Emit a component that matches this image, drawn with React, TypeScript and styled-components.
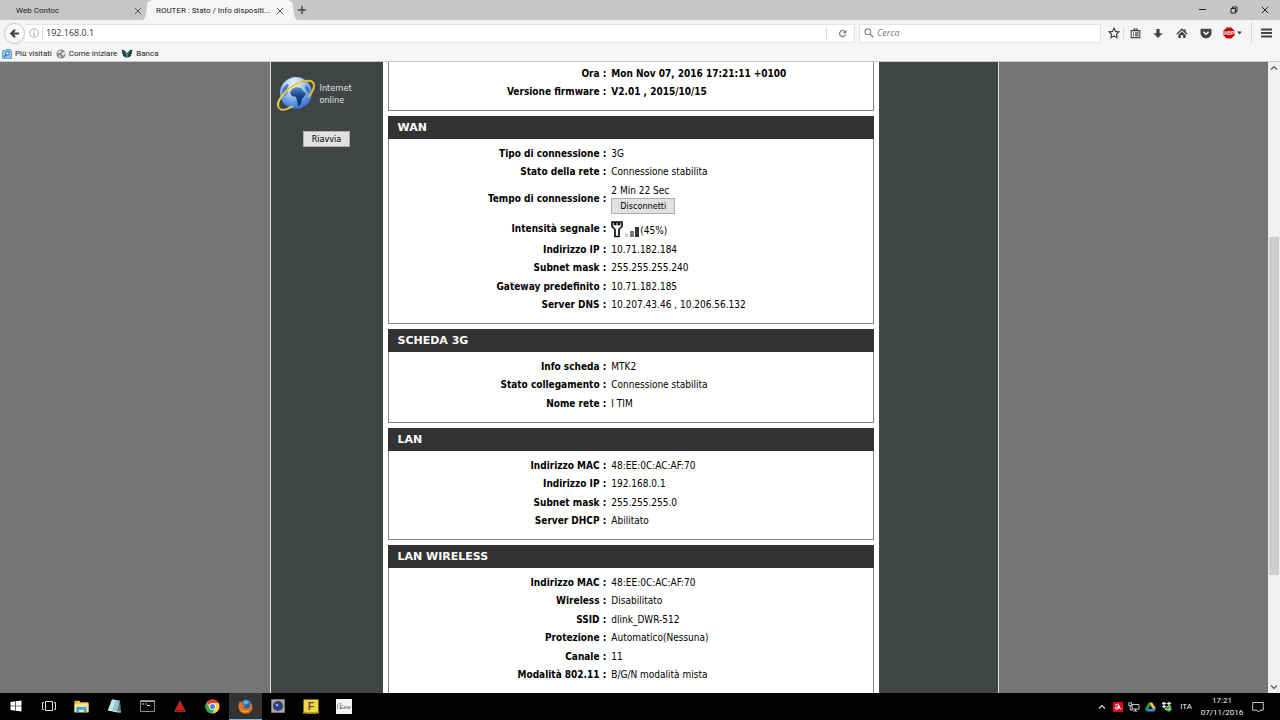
import React from 'react';
import styled, { createGlobalStyle } from 'styled-components';

const chromeFont = 'Roboto, "Open Sans", sans-serif';
const pageFont = '"DejaVu Sans Condensed", "DejaVu Sans", sans-serif';

const GlobalStyle = createGlobalStyle`
  *, *::before, *::after { box-sizing: border-box; }
  body { margin: 0; background: #757575; }
  button { font: inherit; color: inherit; border: 0; padding: 0; background: none; }
  svg { display: block; flex: none; }
`;

const Screen = styled.div`
  display: flex;
  flex-direction: column;
  height: 100vh;
  overflow: hidden;
  font: 8px/12px ${chromeFont};
  color: #222;
`;

/* ---------- browser window ---------- */

const TabStrip = styled.div`
  display: flex;
  align-items: stretch;
  flex: none;
  height: 20px;
  background: #c6c6c6;
`;

const Tab = styled.div<{ $active?: boolean }>`
  display: flex;
  align-items: center;
  justify-content: space-between;
  position: relative;
  width: ${p => (p.$active ? '138px' : '151px')};
  padding: ${p => (p.$active ? '1px 4px 0 5px' : '1px 8px 0 16px')};
  background: ${p => (p.$active ? '#f5f5f5' : 'transparent')};
  white-space: nowrap;
`;

const TabTitle = styled.span`
  overflow: hidden;
  text-overflow: ellipsis;
`;

const TabEdge = styled.svg<{ $side: 'left' | 'right' }>`
  position: absolute;
  top: 0;
  ${p => (p.$side === 'left' ? 'right: 100%;' : 'left: 100%; transform: scaleX(-1);')}
`;

const IconButton = styled.button<{ $w?: number }>`
  display: flex;
  align-items: center;
  justify-content: center;
  flex: none;
  width: ${p => p.$w ?? 24}px;
`;

const NewTab = styled(IconButton)`
  margin-left: 8px;
`;

const WindowControls = styled.div`
  display: flex;
  height: 19px;
  margin-left: auto;
`;

const NavBar = styled.div`
  display: flex;
  align-items: center;
  flex: none;
  height: 26px;
  padding: 0 2px 0 4px;
  background: #f5f5f5;
`;

const BackButton = styled.button`
  display: flex;
  align-items: center;
  justify-content: center;
  flex: none;
  width: 21px;
  height: 21px;
  border: 1px solid #c4c4c4;
  border-radius: 50%;
  background: #fbfbfb;
  z-index: 1;
`;

const Field = styled.label`
  display: flex;
  align-items: center;
  height: 19px;
  border: 1px solid #e4e4e4;
  background: #fff;
`;

const AddressField = styled(Field)`
  flex: 1;
  border-left: 0;
  padding-left: 4px;
`;

const SearchField = styled(Field)`
  width: 242px;
  margin: 0 4px;
  padding-left: 4px;
  gap: 3px;
`;

const TextInput = styled.input`
  flex: 1;
  min-width: 0;
  border: 0;
  padding: 0;
  outline: 0;
  background: none;
  font: 9px/12px "Open Sans", sans-serif;
  color: #333;
  &::placeholder { font-style: italic; color: #777; opacity: 1; }
`;

const Separator = styled.span<{ $h?: number; $tight?: boolean }>`
  flex: none;
  width: 1px;
  height: ${p => p.$h ?? 12}px;
  margin: 0 ${p => (p.$tight ? 0 : 3)}px;
  background: #d8d8d8;
`;

const Bookmarks = styled.nav`
  display: flex;
  align-items: flex-start;
  gap: 4px;
  flex: none;
  height: 16px;
  padding: 2px 2px 0;
  background: #f5f5f5;
  border-bottom: 1px solid #c9cbcb;
`;

const Bookmark = styled.a`
  display: flex;
  align-items: center;
  gap: 3px;
  color: #222;
  text-decoration: none;
`;

/* ---------- router page ---------- */

const Viewport = styled.div`
  display: flex;
  flex: 1;
  min-height: 0;
`;

const Backdrop = styled.main`
  display: flex;
  justify-content: center;
  flex: 1;
  min-width: 0;
  overflow: hidden;
  background: #757575;
`;

const Page = styled.div`
  display: grid;
  grid-template-columns: 112px minmax(0, 1fr) 119px;
  width: 100%;
  max-width: 729px;
  border: solid #e0e0e0;
  border-width: 0 1px;
  background: #404444;
  font: 10px/14px ${pageFont};
  color: #000;
`;

const Sidebar = styled.aside`
  display: flex;
  flex-direction: column;
  align-items: center;
  gap: 19px;
  padding-top: 14px;
`;

const Status = styled.div`
  display: flex;
  align-items: center;
  align-self: stretch;
  gap: 4px;
  padding-left: 6px;
  font-size: 9px;
  line-height: 12px;
  color: #e4e4e4;
`;

const StatusText = styled.span`
  width: 48px;
`;

const FormButton = styled.button`
  display: block;
  height: 16px;
  padding: 0 8px;
  border: 1px solid #adadad;
  background: #e1e1e1;
  font-size: 9px;
  line-height: 14px;
  color: #000;
`;

const Panels = styled.div`
  display: flex;
  flex-direction: column;
  gap: 5px;
  padding: 0 5px;
  background: #fff;
`;

const Panel = styled.section`
  flex: none;
  border: 1px solid #858585;
  border-top: 0;
  padding-bottom: 9px;
`;

const PanelTitle = styled.h2`
  margin: 0 -1px 5px;
  padding: 0 10px;
  background: #333;
  color: #fff;
  font: bold 11px/23px "DejaVu Sans", sans-serif;
`;

const Table = styled.table<{ $cut?: boolean }>`
  width: 100%;
  margin-top: ${p => (p.$cut ? '2px' : '0')};
  border-collapse: collapse;
  table-layout: fixed;
`;

const Row = styled.tr`
  height: 19px;
  &:nth-child(even) { height: 18px; }
`;

const Label = styled.th`
  width: 45%;
  padding: 0;
  text-align: right;
  white-space: nowrap;
`;

const Value = styled.td<{ $bold?: boolean }>`
  padding: 0 0 0 5px;
  font-weight: ${p => (p.$bold ? 'bold' : 'normal')};
  white-space: nowrap;
`;

const Duration = styled.div`
  padding: 3px 0;
`;

const Signal = styled.div`
  display: flex;
  align-items: flex-end;
  height: 23px;
  padding-bottom: 2px;
`;

const ScrollBar = styled.div`
  display: flex;
  flex-direction: column;
  flex: none;
  width: 12px;
  background: #f0f0f0;
`;

const ScrollArrow = styled.button`
  display: flex;
  align-items: center;
  justify-content: center;
  height: 12px;
`;

const ScrollSpace = styled.div<{ $grow: number }>`
  flex: ${p => p.$grow} 0 0;
`;

const ScrollThumb = styled(ScrollSpace)`
  margin: 0 1px;
  background: #cdcdcd;
`;

/* ---------- taskbar ---------- */

const Taskbar = styled.footer`
  display: flex;
  justify-content: space-between;
  flex: none;
  height: 27px;
  background: #020202;
  color: #eee;
`;

const Apps = styled.div`
  display: flex;
  width: 360px;
`;

const AppButton = styled.button<{ $active?: boolean }>`
  display: flex;
  align-items: center;
  justify-content: center;
  flex: 1;
  background: ${p => (p.$active ? '#333' : 'none')};
  border-bottom: 1px solid ${p => (p.$active ? '#76b9ed' : 'transparent')};
`;

const Tray = styled.div`
  display: flex;
  align-items: center;
  padding-right: 10px;
`;

const Language = styled.button`
  width: 24px;
`;

const Clock = styled.div`
  width: 48px;
  text-align: center;
`;

/* ---------- icons ---------- */

const line = { fill: 'none', stroke: '#444', strokeLinecap: 'butt' as const };

const Cross = ({ s = 8, c = '#555' }: { s?: number; c?: string }) => (
  <svg width={s} height={s} viewBox="0 0 8 8"><path d="M.8.8l6.4 6.4M7.2.8L.8 7.2" {...line} stroke={c} /></svg>
);
const Plus = () => <svg width="8" height="8" viewBox="0 0 8 8"><path d="M4 0v8M0 4h8" {...line} strokeWidth="1.4" /></svg>;
const Edge = ({ side }: { side: 'left' | 'right' }) => (
  <TabEdge $side={side} width="8" height="20" viewBox="0 0 8 20">
    <path d="M8 1C3 1 4.500 6 3.500 11S2 19 0 20h8z" fill="#f5f5f5" />
  </TabEdge>
);
const Minimize = () => <svg width="7" height="7" viewBox="0 0 7 7"><path d="M0 3.500h7" {...line} stroke="#222" /></svg>;
const Restore = () => (
  <svg width="8" height="8" viewBox="0 0 8 8"><path d="M1 2.500h4.500V7H1zM2.500 2.500V1H7v4.500H5.500" {...line} stroke="#222" /></svg>
);
const Back = () => (
  <svg width="11" height="11" viewBox="0 0 11 11"><path d="M10 5.500H2.500M6 1.800L2.300 5.500 6 9.200" {...line} strokeWidth="2.200" /></svg>
);
const Info = () => (
  <svg width="10" height="10" viewBox="0 0 10 10">
    <circle cx="5" cy="5" r="4.300" {...line} stroke="#999" strokeWidth=".8" />
    <path d="M5 2.300v1.100M5 4.300v3.400" {...line} stroke="#888" />
  </svg>
);
const Reload = () => (
  <svg width="9" height="9" viewBox="0 0 9 9">
    <path d="M7 2.700A3 3 0 1 0 7.500 5.300" {...line} stroke="#777" strokeWidth="1.200" />
    <path d="M8.200.8v3.400H4.800z" fill="#777" />
  </svg>
);
const Magnifier = () => (
  <svg width="10" height="10" viewBox="0 0 10 10">
    <circle cx="3.800" cy="3.800" r="2.900" {...line} stroke="#888" strokeWidth="1.100" />
    <path d="M6 6l3.300 3.300" {...line} stroke="#888" strokeWidth="1.600" />
  </svg>
);
const Star = () => (
  <svg width="12" height="12" viewBox="0 0 12 12">
    <path d="M6 1.200l1.500 3.200 3.400.4-2.500 2.400.7 3.500L6 9l-3.100 1.700.7-3.500L1.100 4.800l3.400-.4z" {...line} strokeWidth="1.200" />
  </svg>
);
const Clipboard = () => (
  <svg width="11" height="11" viewBox="0 0 11 11">
    <path d="M1.200 2.600h8.600v7H1.200zM3.800 2.600V1h3.400v1.600M3 4.700h1M5 4.700h3.500M3 6.200h1M5 6.200h3.500M3 7.800h1M5 7.800h3.500" {...line} strokeWidth="1.100" />
  </svg>
);
const Download = () => <svg width="10" height="11" viewBox="0 0 10 11"><path d="M3.400 1h3.200v4.200h3L5 10 .4 5.200h3z" fill="#444" /></svg>;
const Home = () => (
  <svg width="12" height="11" viewBox="0 0 12 11">
    <path d="M.8 6.200L6 1.300l5.200 4.900M9 1.200v3" {...line} strokeWidth="1.400" />
    <path d="M6 3.600l3.600 3.300V10H7.200V7.300H4.800V10H2.400V6.900z" fill="#444" />
  </svg>
);
const Pocket = () => (
  <svg width="12" height="11" viewBox="0 0 12 11">
    <path d="M1.500.8h9q1 0 1 1V5a5.500 5.200 0 0 1-11 0V1.800q0-1 1-1z" fill="#444" />
    <path d="M3.400 3.800L6 6.300l2.600-2.500" {...line} stroke="#fff" strokeWidth="1.500" />
  </svg>
);
const AdBlock = () => (
  <svg width="20" height="12" viewBox="0 0 20 12">
    <path d="M3.700.5h4.600L11.500 3.700v4.600L8.300 11.500H3.700L.5 8.300V3.700z" fill="#c80000" />
    <text x="6" y="7.700" fontSize="5" fontWeight="bold" fontFamily="Liberation Sans" fill="#fff" textAnchor="middle">ABP</text>
    <path d="M14 4.500h5l-2.500 3z" fill="#444" />
  </svg>
);
const Menu = () => <svg width="11" height="10" viewBox="0 0 11 10"><path d="M0 1.500h11M0 5h11M0 8.500h11" {...line} strokeWidth="1.800" /></svg>;
const Chevron = ({ up, c = '#555' }: { up?: boolean; c?: string }) => (
  <svg width="8" height="6" viewBox="0 0 8 6"><path d={up ? 'M1 4.500l3-3 3 3' : 'M1 1.500l3 3 3-3'} {...line} stroke={c} strokeWidth="1.200" /></svg>
);

const VisitedIcon = () => (
  <svg width="10" height="10" viewBox="0 0 10 10">
    <path d="M.5 1.500h3l1-1h4l1 1v8h-9z" fill="#8ec4e8" stroke="#5b9cc9" strokeWidth=".8" />
    <circle cx="5.500" cy="4.300" r="1.800" fill="#d8effc" stroke="#2f6d9c" />
    <path d="M4.200 5.700L2 8" stroke="#2f6d9c" strokeWidth="1.300" />
  </svg>
);
const GreyGlobe = () => (
  <svg width="10" height="10" viewBox="0 0 10 10">
    <circle cx="5" cy="5" r="4.600" fill="#8b8b8b" />
    <path d="M1.500 3l2-1.500 2 .6L4.300 4l-1.500.6zM6 3.400l2.600-.8.7 2L7.500 7 6 5.500zM3 6l2 .8L4.500 9l-1.300-.8z" fill="#dedede" />
  </svg>
);
const BankIcon = () => (
  <svg width="12" height="10" viewBox="0 0 12 10">
    <path d="M.5.800L3 1l2.700 2.800V9L3.200 7.800 1.500 6.200l.8-.4L.5 4l.8-.4z" fill="#17434d" />
    <path d="M11.500.800L9 1 6.300 3.800V9l2.500-1.200 1.700-1.600-.8-.4L11.500 4l-.8-.4z" fill="#17434d" />
    <path d="M2 2l3 3M10 2L7 5" stroke="#77a5a7" strokeWidth=".5" />
  </svg>
);

const InternetGlobe = () => (
  <svg width="39" height="36" viewBox="0 0 39 36" aria-hidden="true">
    <defs>
      <radialGradient id="sea" cx=".42" cy=".25" r=".8">
        <stop offset="0" stopColor="#f4f9ff" />
        <stop offset=".4" stopColor="#a9c9f3" />
        <stop offset=".8" stopColor="#4a86dc" />
        <stop offset="1" stopColor="#2d62b8" />
      </radialGradient>
      <linearGradient id="land" x2="0" y2="1">
        <stop offset="0" stopColor="#5f8fc9" />
        <stop offset=".5" stopColor="#123f86" />
        <stop offset="1" stopColor="#0c326f" />
      </linearGradient>
    </defs>
    <path d="M25 6c10-3 14 0 11 8" fill="none" stroke="#caa62a" strokeWidth="1.500" />
    <circle cx="19" cy="17" r="16" fill="url(#sea)" />
    <path d="M15 13l4-2 5 1 3 4 2 1-2 4-2 2-1 5-3 2-1-5-1-4-4-1-2-3z" fill="url(#land)" />
    <path d="M6 12l4-4 2 1-2 4 1 3-3 4-3-3zM28 9l4 3 1 6-3-2-2-4z" fill="#2f66ae" opacity=".8" />
    <path d="M13 4l5-2 3 2-4 3z" fill="#dceafb" opacity=".8" />
    <path d="M3 33C-4 27 9 11 25 6c10-3 14 0 11 8-1 3-3 5-5 7" fill="none" stroke="#dfba35" strokeWidth="2" />
    <path d="M1.500 29C1 23 11 12 25 6" fill="none" stroke="#f8e47b" />
    <path d="M3 33c3 2 8 0 13-3" fill="none" stroke="#efd04e" strokeWidth="1.600" />
  </svg>
);

const SignalIcon = () => (
  <svg width="29" height="17" viewBox="0 0 29 17" role="img" aria-label="Segnale">
    <path d="M1 1h2.500v2.500h1.200V1h2.600v2.500h1.200V1H11v4.500L8 8.500v7H4v-7l-3-3z" fill="#fff" stroke="#111" strokeWidth="1.700" />
    <path d="M14 13h3v3h-3z" fill="#ccc" />
    <path d="M19 10h4v6h-4z" fill="#777" />
    <path d="M24 6h4v10h-4z" fill="#333" />
  </svg>
);

const WindowsLogo = () => (
  <svg width="12" height="12" viewBox="0 0 12 12"><path d="M.5 2L5 1.300v4.400H.5zM5.600 1.200L11.500.4v5.300H5.600zM.5 6.300H5v4.400L.5 10zM5.600 6.300h5.900v5.300l-5.900-.8z" fill="#fff" /></svg>
);
const TaskView = () => (
  <svg width="14" height="12" viewBox="0 0 14 12"><path d="M3.500 1.500h7v9h-7zM2 2.500H.5v7H2M12 2.500h1.500v7H12" {...line} stroke="#ddd" /></svg>
);
const Explorer = () => (
  <svg width="15" height="13" viewBox="0 0 15 13">
    <path d="M.5.8h5l1 1.500h8v10H.5z" fill="#e9b94c" />
    <path d="M.5 3.500h14v8.800H.5z" fill="#fbe08e" />
    <path d="M2.500 7h10v5.500H10V9.800H5v2.700H2.500z" fill="#37a5dd" />
  </svg>
);
const Notebook = () => (
  <svg width="15" height="14" viewBox="0 0 15 14">
    <path d="M5 .5l8 1-2.500 11.500L1 11z" fill="#8fc3cd" />
    <path d="M5 .5l4 .5-4 11-4-1z" fill="#c3e5e8" />
    <path d="M13 1.500l1 11.500h-3.500z" fill="#547f8a" />
    <path d="M1 11l9.500 2H14" stroke="#eee" fill="none" />
  </svg>
);
const Terminal = () => (
  <svg width="15" height="12" viewBox="0 0 15 12">
    <path d="M.5.5h14v11H.5z" fill="#050505" stroke="#8b8b8b" />
    <path d="M1 1.500h13" stroke="#aaa" />
    <path d="M2 4h2M5 4h1.500M7 5.500h3" stroke="#ddd" />
  </svg>
);
const RedTriangle = () => (
  <svg width="12" height="12" viewBox="0 0 12 12"><path d="M6 .8l5.400 10.700H.6z" fill="#e91212" stroke="#666" strokeWidth=".6" /><path d="M1.500 10.500h9" stroke="#a00" /></svg>
);
const Chrome = () => (
  <svg width="15" height="15" viewBox="0 0 16 16">
    <circle cx="8" cy="8" r="7.500" fill="#fdd23c" />
    <path d="M8 8L1.500 4.250A7.500 7.500 0 0 1 14.500 4.250H8z" fill="#e24132" />
    <path d="M1.500 4.250A7.500 7.500 0 0 0 7.300 15.500L11 10 4.700 9z" fill="#35a455" />
    <circle cx="8" cy="8" r="3.700" fill="#fff" />
    <circle cx="8" cy="8" r="2.800" fill="#4587ee" />
  </svg>
);
const Firefox = () => (
  <svg width="15" height="15" viewBox="0 0 16 16">
    <circle cx="8.500" cy="7" r="6.500" fill="#2268ad" />
    <path d="M6 2q3-2 6 1l-2 2-3 1z" fill="#66b4df" />
    <path d="M.8 5.500L2 2l1.500 1.700L6 3.500 5.500 6l2.300.8-2 1.700c.5 2.500 4.700 2.500 6.500.3 1.200-1.600.5-4-.5-5.500 3.500 2 4.400 5.700 2.800 8.700C13 15 10 16 7.500 15.700 2.500 15.300-.5 10.500.8 5.500z" fill="#e9701d" />
    <path d="M2 9c1 4 6 5.500 10 2.500-2 4-9 4-10-2.500z" fill="#f8b530" />
  </svg>
);
const CameraIcon = () => (
  <svg width="14" height="14" viewBox="0 0 14 14">
    <path d="M.5.5h13v13H.5z" fill="#a5a7ab" stroke="#777" />
    <circle cx="7" cy="7" r="5" fill="#3a3f52" />
    <circle cx="7" cy="7" r="3" fill="#27409c" />
    <circle cx="6" cy="6" r="1.200" fill="#9bb2e8" />
  </svg>
);
const YellowF = () => (
  <svg width="16" height="15" viewBox="0 0 15 14">
    <path d="M.5.5h14v11.500l-3 1.500h-8l-3-1.500z" fill="#f5d83c" />
    <path d="M0 11.500l3.500 1 4-.5 4 .5 3.500-1v2H0z" fill="#b99c18" />
    <text x="7.500" y="10" fontSize="10" fontWeight="bold" fontFamily="Liberation Sans" fill="#5b4a6d" textAnchor="middle">F</text>
  </svg>
);
const EwApp = () => (
  <svg width="16" height="15" viewBox="0 0 16 15">
    <path d="M0 0h16v15H0z" fill="#f4f4f4" />
    <text x="9" y="10" fontSize="6" fontFamily="Liberation Sans" fill="#555" textAnchor="middle">Eew</text>
    <path d="M1.500 10V5.500q2-1.500 4-.5" {...line} stroke="#777" strokeWidth=".7" />
  </svg>
);

const Avira = () => (
  <svg width="10" height="10" viewBox="0 0 10 10">
    <path d="M0 0h10v10H0z" fill="#e3051b" />
    <path d="M2.200 3q3.300-1.800 3.800.2L5 7.200M5.500 4.800Q2 4.600 2 6.200t3 .6M6 3.500q0 3.700 2.300 3.500" {...line} stroke="#fff" />
  </svg>
);
const Network = () => (
  <svg width="12" height="10" viewBox="0 0 12 10"><path d="M4 2.500h7v4.500H4zM7.500 7v2M5.500 9h4M.8.800h2.700v2.700H.8zM2.200 3.500V8H5" {...line} stroke="#ddd" strokeWidth=".9" /></svg>
);
const Drive = () => (
  <svg width="11" height="10" viewBox="0 0 11 10">
    <path d="M3.800.5h3.400L11 6.700H7.600z" fill="#fbc72d" />
    <path d="M3.800.5L0 6.700l1.700 2.800 3.800-6.200z" fill="#219d59" />
    <path d="M3.500 6.700H11L9.300 9.500H1.700z" fill="#3f83ee" />
  </svg>
);
const Dropbox = () => (
  <svg width="11" height="11" viewBox="0 0 11 11">
    <path d="M3 .8l2.500 1.600L3 4 .5 2.400zM8 .8l2.500 1.600L8 4 5.500 2.400zM3 4l2.500 1.600L3 7.200.5 5.600zM8 4l2.500 1.600L8 7.200 5.500 5.600zM5.500 6.600l2 1.500-2 1.400-2-1.400z" fill="#e9e9e9" />
    <circle cx="8" cy="8" r="2.700" fill="#35aa3b" />
    <path d="M6.700 8l1 1 1.600-2" {...line} stroke="#fff" strokeWidth=".8" />
  </svg>
);
const Notifications = () => (
  <svg width="12" height="12" viewBox="0 0 12 12"><path d="M.7 1.500h10.600v7.700H8L6.500 11 5 9.200H.7z" {...line} stroke="#ddd" strokeWidth=".9" /></svg>
);

/* ---------- content ---------- */

type Entry = [string, React.ReactNode];

const wan: Entry[] = [
  ['Tipo di connessione', '3G'],
  ['Stato della rete', 'Connessione stabilita'],
  ['Tempo di connessione', <Duration>2 Min 22 Sec<FormButton type="button">Disconnetti</FormButton></Duration>],
  ['Intensità segnale', <Signal><SignalIcon />(45%)</Signal>],
  ['Indirizzo IP', '10.71.182.184'],
  ['Subnet mask', '255.255.255.240'],
  ['Gateway predefinito', '10.71.182.185'],
  ['Server DNS', '10.207.43.46 , 10.206.56.132'],
];
const card: Entry[] = [
  ['Info scheda', 'MTK2'],
  ['Stato collegamento', 'Connessione stabilita'],
  ['Nome rete', 'I TIM'],
];
const lan: Entry[] = [
  ['Indirizzo MAC', '48:EE:0C:AC:AF:70'],
  ['Indirizzo IP', '192.168.0.1'],
  ['Subnet mask', '255.255.255.0'],
  ['Server DHCP', 'Abilitato'],
];
const wireless: Entry[] = [
  ['Indirizzo MAC', '48:EE:0C:AC:AF:70'],
  ['Wireless', 'Disabilitato'],
  ['SSID', 'dlink_DWR-512'],
  ['Protezione', 'Automatico(Nessuna)'],
  ['Canale', '11'],
  ['Modalità 802.11', 'B/G/N modalità mista'],
];
const device: Entry[] = [
  ['Ora', 'Mon Nov 07, 2016 17:21:11 +0100'],
  ['Versione firmware', 'V2.01 , 2015/10/15'],
];

function InfoPanel({ title, rows, bold }: { title?: string; rows: Entry[]; bold?: boolean }) {
  return (
    <Panel>
      {title && <PanelTitle>{title}</PanelTitle>}
      <Table $cut={!title}>
        <tbody>
          {rows.map(([label, value]) => (
            <Row key={label}>
              <Label scope="row">{label} :</Label>
              <Value $bold={bold}>{value}</Value>
            </Row>
          ))}
        </tbody>
      </Table>
    </Panel>
  );
}

const taskbarApps: [string, React.FC][] = [
  ['Start', WindowsLogo], ['Visualizzazione attività', TaskView], ['Esplora file', Explorer],
  ['Blocco note', Notebook], ['Prompt dei comandi', Terminal], ['Triangolo', RedTriangle],
  ['Chrome', Chrome], ['Firefox', Firefox], ['Fotocamera', CameraIcon], ['F', YellowF], ['Eew', EwApp],
];

export default function App() {
  return (
    <Screen>
      <GlobalStyle />
      <TabStrip>
        <Tab>
          <TabTitle>Web Contoc</TabTitle>
          <IconButton $w={10} aria-label="Chiudi scheda"><Cross /></IconButton>
        </Tab>
        <Tab $active>
          <Edge side="left" />
          <TabTitle>ROUTER : Stato / Info dispositi...</TabTitle>
          <IconButton $w={10} aria-label="Chiudi scheda"><Cross /></IconButton>
          <Edge side="right" />
        </Tab>
        <NewTab $w={10} aria-label="Nuova scheda"><Plus /></NewTab>
        <WindowControls>
          <IconButton $w={31} aria-label="Riduci"><Minimize /></IconButton>
          <IconButton $w={31} aria-label="Ripristina"><Restore /></IconButton>
          <IconButton $w={31} aria-label="Chiudi"><Cross c="#222" /></IconButton>
        </WindowControls>
      </TabStrip>

      <NavBar>
        <BackButton aria-label="Indietro"><Back /></BackButton>
        <AddressField>
          <Info />
          <Separator />
          <TextInput aria-label="Indirizzo" defaultValue="192.168.0.1" />
          <Separator />
          <IconButton aria-label="Ricarica"><Reload /></IconButton>
        </AddressField>
        <SearchField>
          <Magnifier />
          <TextInput aria-label="Cerca" placeholder="Cerca" />
        </SearchField>
        <IconButton $w={18} aria-label="Segnalibro"><Star /></IconButton>
        <Separator $tight />
        <IconButton $w={22} aria-label="Elenco segnalibri"><Clipboard /></IconButton>
        <IconButton aria-label="Download"><Download /></IconButton>
        <IconButton aria-label="Pagina iniziale"><Home /></IconButton>
        <IconButton aria-label="Pocket"><Pocket /></IconButton>
        <IconButton $w={30} aria-label="Adblock Plus"><AdBlock /></IconButton>
        <Separator $h={22} />
        <IconButton $w={23} aria-label="Menu"><Menu /></IconButton>
      </NavBar>

      <Bookmarks>
        <Bookmark href="#visitati"><VisitedIcon />Più visitati</Bookmark>
        <Bookmark href="#iniziare"><GreyGlobe />Come iniziare</Bookmark>
        <Bookmark href="#banca"><BankIcon />Banca</Bookmark>
      </Bookmarks>

      <Viewport>
        <Backdrop>
          <Page>
            <Sidebar>
              <Status><InternetGlobe /><StatusText>Internet online</StatusText></Status>
              <FormButton type="button">Riavvia</FormButton>
            </Sidebar>
            <Panels>
              <InfoPanel rows={device} bold />
              <InfoPanel title="WAN" rows={wan} />
              <InfoPanel title="SCHEDA 3G" rows={card} />
              <InfoPanel title="LAN" rows={lan} />
              <InfoPanel title="LAN WIRELESS" rows={wireless} />
            </Panels>
          </Page>
        </Backdrop>
        <ScrollBar>
          <ScrollArrow aria-label="Scorri su"><Chevron up /></ScrollArrow>
          <ScrollSpace $grow={163} />
          <ScrollThumb $grow={338} />
          <ScrollSpace $grow={106} />
          <ScrollArrow aria-label="Scorri giù"><Chevron /></ScrollArrow>
        </ScrollBar>
      </Viewport>

      <Taskbar>
        <Apps>
          {taskbarApps.map(([name, Icon]) => (
            <AppButton key={name} aria-label={name} $active={name === 'Firefox'}><Icon /></AppButton>
          ))}
        </Apps>
        <Tray>
          <IconButton $w={16} aria-label="Mostra icone nascoste"><Chevron up c="#ddd" /></IconButton>
          <IconButton $w={16} aria-label="Avira"><Avira /></IconButton>
          <IconButton $w={16} aria-label="Rete"><Network /></IconButton>
          <IconButton $w={16} aria-label="Drive"><Drive /></IconButton>
          <IconButton $w={16} aria-label="Dropbox"><Dropbox /></IconButton>
          <Language>ITA</Language>
          <Clock>17:21<br />07/11/2016</Clock>
          <IconButton aria-label="Notifiche"><Notifications /></IconButton>
        </Tray>
      </Taskbar>
    </Screen>
  );
}
